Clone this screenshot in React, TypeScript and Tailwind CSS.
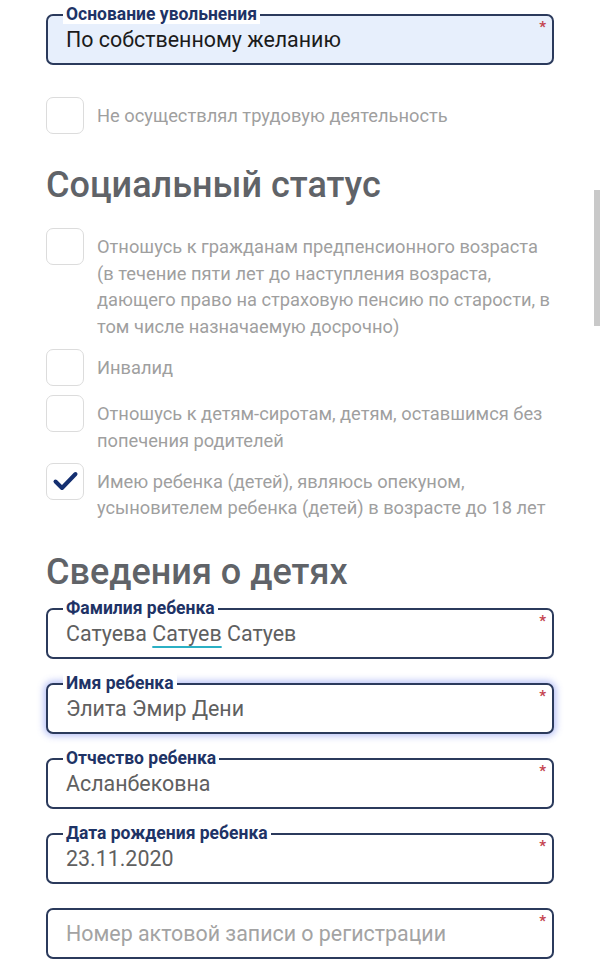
import React from 'react';

const font = { fontFamily: 'Roboto, "Noto Sans", sans-serif' };

function Asterisk() {
  return (
    <span className="absolute right-[6px] top-[1px] text-[15px] font-bold leading-[20px] text-[#c4444f]">*</span>
  );
}

function Field({
  label,
  value,
  placeholder,
  dark,
  focused,
  autofill,
}: {
  label?: string;
  value?: React.ReactNode;
  placeholder?: string;
  dark?: boolean;
  focused?: boolean;
  autofill?: boolean;
}) {
  return (
    <div
      className={
        'relative h-[51px] rounded-[7px] border-2 border-[#2b3a5c] ' +
        (autofill ? 'bg-[#e7effc] ' : 'bg-white ') +
        (focused ? 'shadow-[0_0_7px_2px_rgba(92,112,235,0.45)]' : '')
      }
    >
      {label && (
        <span className="absolute left-[15px] top-[-12px] bg-white px-[3px] text-[17.5px] font-bold leading-[20px] text-[#1e3366]">
          {label}
        </span>
      )}
      <Asterisk />
      <div
        className={
          'pl-[18px] pt-[12px] text-[21.4px] leading-[24px] ' +
          (placeholder ? 'text-[#a3a3a3]' : dark ? 'text-[#1b1b1b]' : 'text-[#606060]')
        }
      >
        {value ?? placeholder}
      </div>
    </div>
  );
}

function Checkbox({ checked, children }: { checked?: boolean; children: React.ReactNode }) {
  return (
    <div className="flex items-start">
      <div className="flex h-[37px] w-[38px] shrink-0 items-center justify-center rounded-[7px] border-[1.5px] border-[#dcdcdc] bg-white">
        {checked && (
          <svg width="27" height="22" viewBox="0 0 27 22" fill="none">
            <path d="M3.5 11.5l6.5 6.5L23.5 4" stroke="#142f70" strokeWidth="4" strokeLinecap="round" strokeLinejoin="round" />
          </svg>
        )}
      </div>
      <div className="pl-[13px] pt-[6px] text-[18.3px] leading-[26.7px] text-[#9f9f9f]">{children}</div>
    </div>
  );
}

export default function App() {
  return (
    <div className="relative min-h-[974px] w-[600px] overflow-hidden bg-white" style={font}>
      <div className="px-[46px] pt-[14px]">
        <Field label="Основание увольнения" value="По собственному желанию" dark autofill />

        <div className="mt-[32px]">
          <Checkbox>Не осуществлял трудовую деятельность</Checkbox>
        </div>

        <h2 className="mt-[31px] text-[36px] font-medium leading-[40px] text-[#606368]">Социальный статус</h2>

        <div className="mt-[23px] flex flex-col gap-[8.5px]">
          <Checkbox>
            Отношусь к гражданам предпенсионного возраста (в течение пяти лет до наступления возраста, дающего
            право на страховую пенсию по старости, в том числе назначаемую досрочно)
          </Checkbox>
          <Checkbox>Инвалид</Checkbox>
          <Checkbox>Отношусь к детям-сиротам, детям, оставшимся без попечения родителей</Checkbox>
          <Checkbox checked>
            Имею ребенка (детей), являюсь опекуном, усыновителем ребенка (детей) в возрасте до 18 лет
          </Checkbox>
        </div>

        <h2 className="mt-[30px] text-[36px] font-medium leading-[40px] text-[#606368]">Сведения о детях</h2>

        <div className="mt-[16px] flex flex-col gap-[24px]">
          <Field
            label="Фамилия ребенка"
            value={
              <>
                Сатуева{' '}
                <span className="underline decoration-[#2bb0c4] decoration-2 underline-offset-[5px]">Сатуев</span>{' '}
                Сатуев
              </>
            }
          />
          <Field label="Имя ребенка" value="Элита Эмир Дени" focused />
          <Field label="Отчество ребенка" value="Асланбековна" />
          <Field label="Дата рождения ребенка" value="23.11.2020" />
          <Field placeholder="Номер актовой записи о регистрации" />
        </div>
      </div>

      {/* scroll indicator */}
      <div className="absolute right-0 top-[190px] h-[136px] w-[6px] bg-[#c9c9c9]" />
    </div>
  );
}
